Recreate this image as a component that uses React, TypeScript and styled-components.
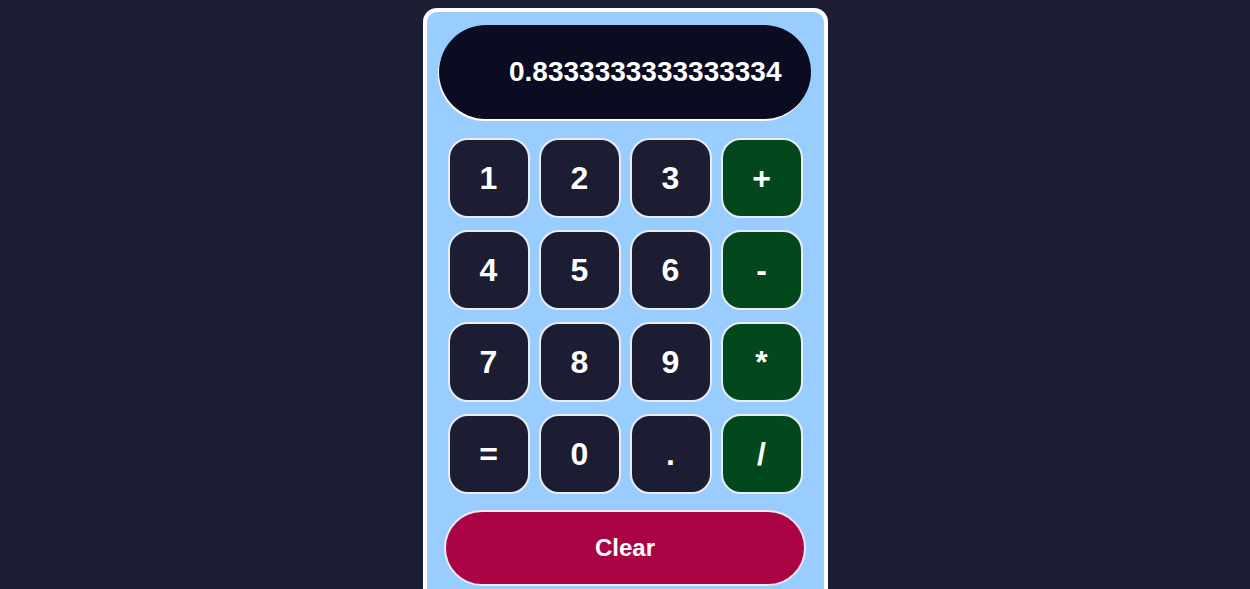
import styled, { createGlobalStyle } from 'styled-components'

const GlobalStyle = createGlobalStyle`
  body {
    margin: 8px;
    background: #1c1c33;
    font-family: 'Liberation Sans', Arial, sans-serif;
  }
`

const Calculator = styled.div`
  width: 397px;
  margin: 0 auto;
  border: 4px solid #ffffff;
  border-radius: 14px;
  background: #99ccff;
  padding: 13px 0 20px;
  display: flex;
  flex-direction: column;
  align-items: center;
`

const Display = styled.div`
  box-sizing: border-box;
  width: 372px;
  height: 94px;
  margin-left: -1px;
  border-radius: 47px;
  background: #0b0b22;
  box-shadow: -1px 2px 0 #ffffff;
  color: #ffffff;
  font-size: 28px;
  font-weight: bold;
  display: flex;
  align-items: center;
  justify-content: flex-end;
  padding-right: 29px;
`

const Keypad = styled.div`
  display: grid;
  grid-template-columns: repeat(4, 82px);
  grid-auto-rows: 80px;
  column-gap: 9px;
  row-gap: 12px;
  margin-top: 19px;
`

const Key = styled.button<{ $op?: boolean }>`
  box-sizing: border-box;
  border: 2px solid #e8ecf4;
  border-radius: 20px;
  background: ${({ $op }) => ($op ? '#03471d' : '#1c1c32')};
  color: #ffffff;
  font-family: 'Liberation Sans', Arial, sans-serif;
  font-size: 32px;
  font-weight: bold;
  padding: 0;
  cursor: pointer;
`

const ClearButton = styled.button`
  box-sizing: border-box;
  width: 362px;
  height: 76px;
  margin-top: 16px;
  border: 2px solid #e8ecf4;
  border-radius: 38px;
  background: #aa0445;
  color: #ffffff;
  font-family: 'Liberation Sans', Arial, sans-serif;
  font-size: 24px;
  font-weight: bold;
  cursor: pointer;
`

const keys = [
  ['1', false], ['2', false], ['3', false], ['+', true],
  ['4', false], ['5', false], ['6', false], ['-', true],
  ['7', false], ['8', false], ['9', false], ['*', true],
  ['=', false], ['0', false], ['.', false], ['/', true],
] as const

const App = () => (
  <>
    <GlobalStyle />
    <Calculator>
      <Display>0.8333333333333334</Display>
      <Keypad>
        {keys.map(([label, op]) => (
          <Key key={label} $op={op}>
            {label}
          </Key>
        ))}
      </Keypad>
      <ClearButton>Clear</ClearButton>
    </Calculator>
  </>
)

export default App
